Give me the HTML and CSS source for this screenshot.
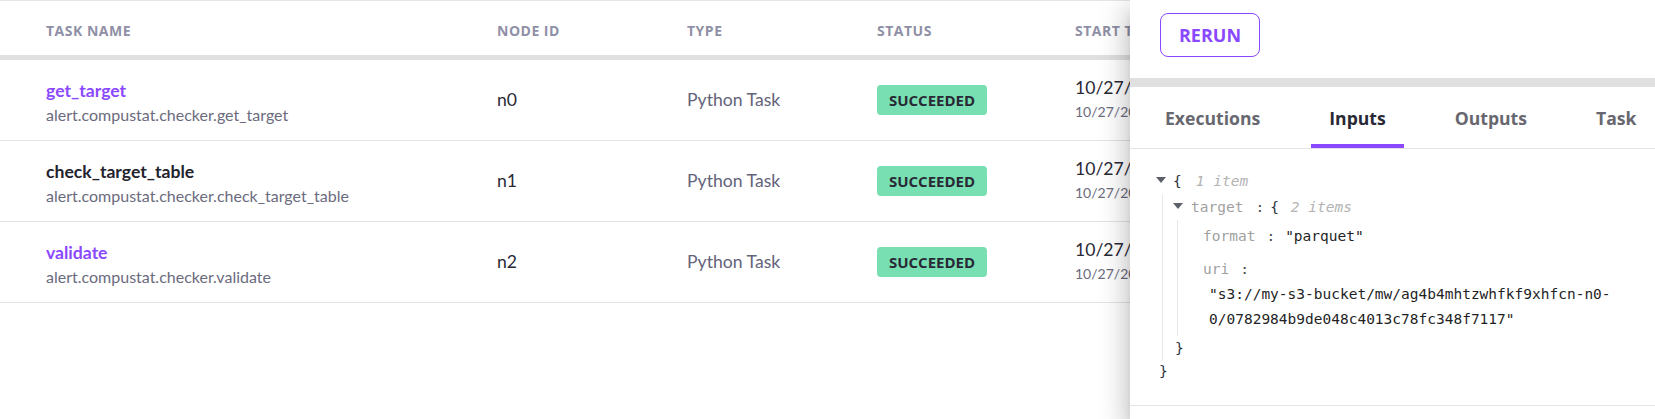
FILE: index.html
```html
<!DOCTYPE html>
<html lang="en">
<head>
<meta charset="utf-8">
<title>Node executions</title>
<link rel="stylesheet" href="styles.css">
</head>
<body>
<div class="page">
  <div class="table">
    <div class="thead">
      <div class="th">Task Name</div>
      <div class="th">Node ID</div>
      <div class="th">Type</div>
      <div class="th">Status</div>
      <div class="th">Start Time</div>
    </div>
    <div class="row">
      <div class="cell name"><div class="title link">get_target</div><div class="sub">alert.compustat.checker.get_target</div></div>
      <div class="cell">n0</div>
      <div class="cell muted">Python Task</div>
      <div class="cell"><span class="badge">Succeeded</span></div>
      <div class="cell time"><div class="main">10/27/2021 9:03:21 PM UTC</div><div class="sub">10/27/2021 2:03:21 PM PDT</div></div>
    </div>
    <div class="row">
      <div class="cell name"><div class="title">check_target_table</div><div class="sub">alert.compustat.checker.check_target_table</div></div>
      <div class="cell">n1</div>
      <div class="cell muted">Python Task</div>
      <div class="cell"><span class="badge">Succeeded</span></div>
      <div class="cell time"><div class="main">10/27/2021 9:03:42 PM UTC</div><div class="sub">10/27/2021 2:03:42 PM PDT</div></div>
    </div>
    <div class="row">
      <div class="cell name"><div class="title link">validate</div><div class="sub">alert.compustat.checker.validate</div></div>
      <div class="cell">n2</div>
      <div class="cell muted">Python Task</div>
      <div class="cell"><span class="badge">Succeeded</span></div>
      <div class="cell time"><div class="main">10/27/2021 9:04:05 PM UTC</div><div class="sub">10/27/2021 2:04:05 PM PDT</div></div>
    </div>
  </div>

  <aside class="panel">
    <div class="panel-head"><button class="rerun" type="button">Rerun</button></div>
    <div class="panel-sep"></div>
    <nav class="tabs">
      <div class="tab">Executions</div>
      <div class="tab active">Inputs</div>
      <div class="tab">Outputs</div>
      <div class="tab">Task</div>
    </nav>
    <div class="json">
      <div class="jl"><span class="caret"></span><span class="brace open">{</span><span class="meta">1 item</span></div>
      <div class="jb outer">
        <div class="jl target"><span class="caret"></span><span class="key">target</span><span class="colon">:</span><span class="brace open2">{</span><span class="meta">2 items</span></div>
        <div class="jb inner">
          <div class="jv"><span class="key">format</span><span class="colon">:</span><span class="str">"parquet"</span></div>
          <div class="jv"><span class="key">uri</span><span class="colon">:</span><span class="str long">"s3://my-s3-bucket/mw/ag4b4mhtzwhfkf9xhfcn-n0-0/0782984b9de048c4013c78fc348f7117"</span></div>
        </div>
        <div class="jl close-inner"><span class="brace">}</span></div>
      </div>
      <div class="jl close-outer"><span class="brace">}</span></div>
    </div>
  </aside>
</div>
</body>
</html>
```

FILE: styles.css
```css
* { box-sizing: border-box; margin: 0; padding: 0; }
html, body { width: 1655px; height: 419px; overflow: hidden; background: #fff; }
body { font-family: Lato, "Open Sans", sans-serif; color: #292936; }

.page { position: relative; width: 1655px; height: 419px; }

.table { width: 1130px; border-top: 1px solid #e6e6e6; }
.thead, .row {
  display: grid;
  grid-template-columns: 451px 190px 190px 198px 1fr;
  padding-left: 46px;
  align-items: center;
  white-space: nowrap;
}
.thead { height: 59px; padding-top: 4px; border-bottom: 5px solid #e0e0e0; }
.th {
  font-family: "Open Sans", sans-serif;
  font-weight: 700;
  font-size: 14px;
  letter-spacing: 0.5px;
  text-transform: uppercase;
  color: #8f90a6;
}
.row { height: 81px; border-bottom: 1px solid #e3e3e3; }
.cell { font-size: 17.6px; line-height: 24px; overflow: hidden; }
.cell.name { padding-top: 6px; }
.title { font-weight: 700; font-size: 17.6px; line-height: 22px; color: #23232e; }
.title.link { color: #8a48ff; }
.sub { font-size: 16px; line-height: 22px; color: #6b6b7e; margin-top: 2px; }
.muted { color: #63637a; }
.time .main { line-height: 24px; }
.time .sub { font-size: 14px; line-height: 24px; margin-top: 0; }
.badge {
  display: inline-block;
  width: 110px;
  height: 30px;
  line-height: 30px;
  text-align: center;
  border-radius: 4px;
  background: #77dfb1;
  font-family: "Open Sans", sans-serif;
  font-weight: 700;
  font-size: 15px;
  text-transform: uppercase;
  color: #292936;
  vertical-align: middle;
}

.panel {
  position: absolute;
  top: 0;
  left: 1130px;
  width: 525px;
  height: 419px;
  background: #fff;
  box-shadow: 0 8px 10px -5px rgba(0,0,0,.2), 0 16px 24px 2px rgba(0,0,0,.14), 0 6px 30px 5px rgba(0,0,0,.12);
}
.panel-head { padding: 13px 30px 21px; }
.rerun {
  width: 100px;
  height: 44px;
  border: 1px solid #8a48ff;
  border-radius: 8px;
  background: #fff;
  color: #8a48ff;
  font-family: "Open Sans", sans-serif;
  font-weight: 700;
  font-size: 18px;
  text-transform: uppercase;
}
.panel-sep { height: 9px; background: #e0e0e0; }
.tabs {
  display: flex;
  gap: 33px;
  height: 62px;
  padding-left: 17px;
  border-bottom: 1px solid #e4e4e4;
}
.tab {
  display: flex;
  align-items: center;
  padding: 4px 18px 0;
  font-family: "Open Sans", sans-serif;
  font-weight: 700;
  font-size: 17.6px;
  color: #67676f;
  border-bottom: 4px solid transparent;
}
.tab.active { color: #292936; border-bottom-color: #8a48ff; }

.json {
  height: 257px;
  padding: 20px 0 0 26px;
  border-bottom: 1px solid #e4e4e4;
  font-family: "DejaVu Sans Mono", monospace;
  font-size: 14.5px;
  line-height: 25px;
  color: #2b2b2b;
}
.jl { display: flex; align-items: center; height: 25px; }
.caret {
  width: 0; height: 0;
  border-left: 5px solid transparent;
  border-right: 5px solid transparent;
  border-top: 6px solid #5b6068;
  margin-top: -4px;
}
.brace { color: #2d3440; }
.brace.open { margin-left: 7px; }
.brace.open2 { margin-left: 6px; }
.meta { font-style: italic; color: #b3b3b3; margin-left: 14px; }
.target .meta { margin-left: 12px; }
.key { color: #9f9f9f; }
.target .key { margin-left: 8px; }
.colon { color: #4a4a4a; margin-left: 11px; }
.target .colon { margin-left: 12px; }
.jb { border-left: 1px solid #e8e8e8; }
.jb.outer { margin-left: 6px; }
.jl.target { margin-left: 10px; margin-top: 1px; }
.jb.inner { margin-left: 14px; padding-left: 25px; }
.jv { padding: 4px 0; }
.jv .str { margin-left: 10px; color: #1f1f26; }
.jv .str.long { display: block; margin-left: 6px; width: 405px; word-break: break-all; }
.close-inner { margin-left: 12px; }
.close-outer { margin-left: 3px; margin-top: -2px; }
```
